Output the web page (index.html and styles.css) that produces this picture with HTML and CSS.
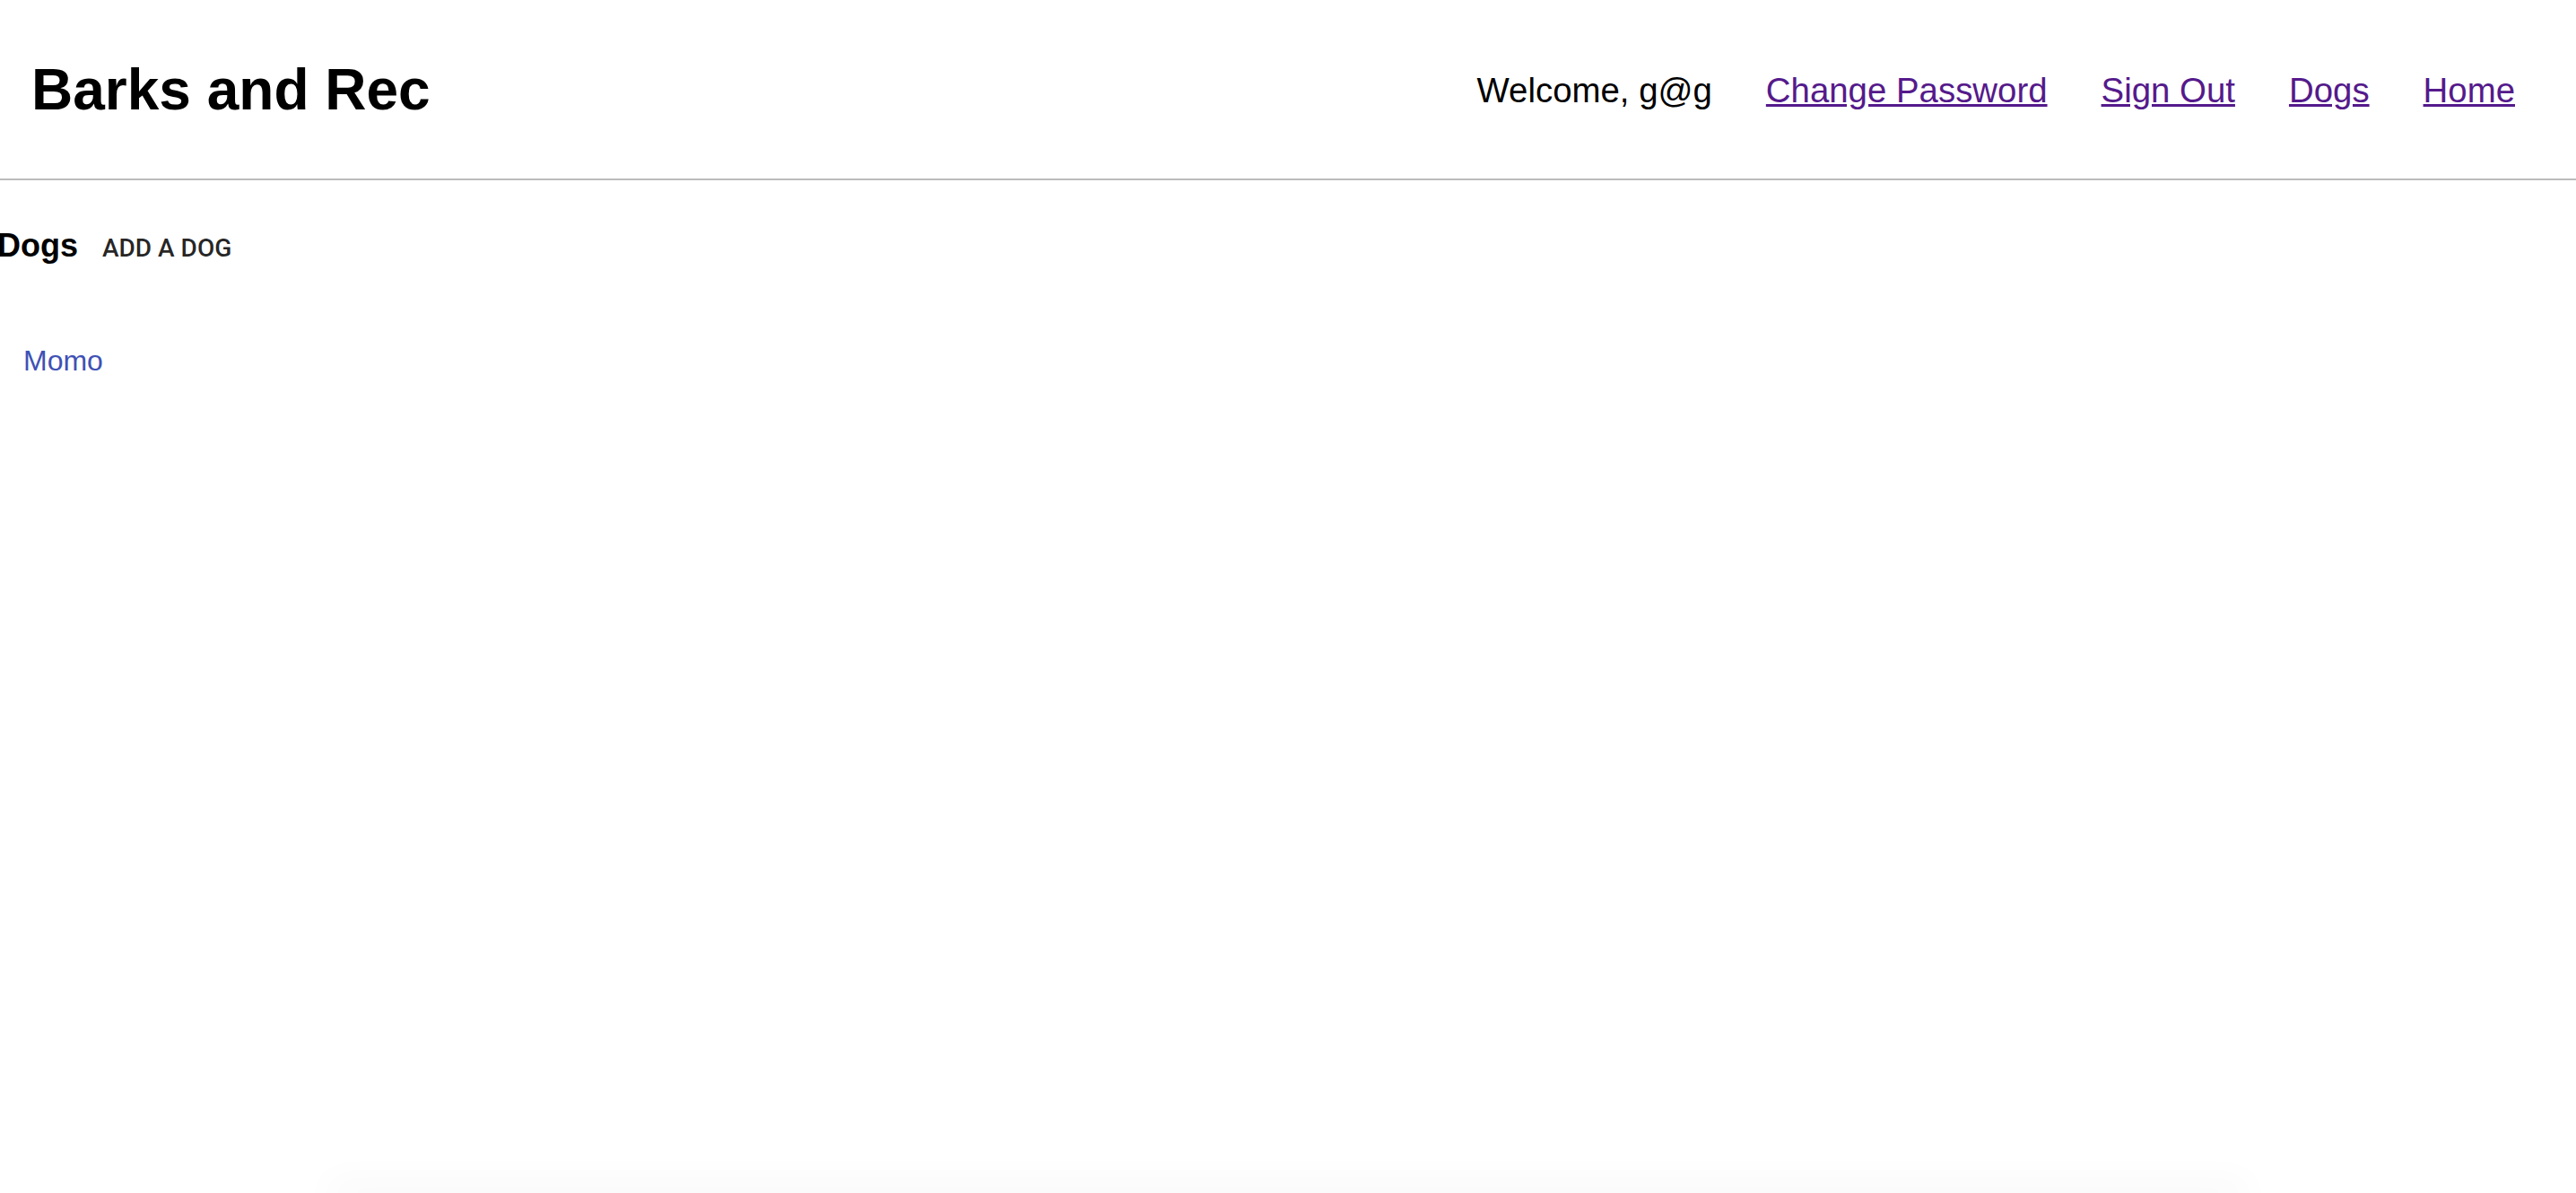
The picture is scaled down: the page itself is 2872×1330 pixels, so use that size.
FILE: index.html
```html
<!DOCTYPE html>
<html lang="en">
<head>
<meta charset="utf-8">
<title>Barks and Rec</title>
<link rel="stylesheet" href="styles.css">
</head>
<body>
<div class="page">
  <header class="site-header">
    <h1 class="brand">Barks and Rec</h1>
    <nav class="site-nav">
      <span class="welcome">Welcome, g@g</span>
      <a class="nav-link" href="#change-password">Change Password</a>
      <a class="nav-link" href="#sign-out">Sign Out</a>
      <a class="nav-link" href="#dogs">Dogs</a>
      <a class="nav-link" href="#home">Home</a>
    </nav>
  </header>
  <main class="content">
    <div class="toolbar">
      <h3 class="section-title">Dogs</h3>
      <button class="text-button" type="button">Add a Dog</button>
    </div>
    <ul class="dog-list">
      <li class="dog-item"><a class="dog-link" href="#momo">Momo</a></li>
    </ul>
  </main>
  <div class="fold-shadow"></div>
</div>
</body>
</html>
```
FILE: styles.css
```css
html, body {
  margin: 0;
  padding: 0;
  height: 100%;
  background: #ffffff;
}

body {
  font-family: "Liberation Sans", Arial, Helvetica, sans-serif;
  color: #000000;
  overflow: hidden;
}

.page {
  min-height: 100vh;
  display: flex;
  flex-direction: column;
}

.site-header {
  display: flex;
  justify-content: space-between;
  align-items: center;
  height: 199px;
  padding: 0 68px 0 35px;
  border-bottom: 2px solid #bbbbbb;
}

.brand {
  margin: 0;
  font-size: 64px;
  font-weight: bold;
}

.site-nav {
  display: flex;
  align-items: baseline;
  gap: 60px;
  font-size: 38.4px;
  padding-top: 2px;
}

.welcome {
  color: #000000;
}

.nav-link {
  color: #551a8b;
  text-decoration: underline;
}

.content {
  display: flex;
  flex-direction: column;
}

.toolbar {
  display: flex;
  align-items: baseline;
  margin-top: 39px;
  margin-left: -3px;
}

.section-title {
  margin: 0 11px 0 0;
  font-size: 36px;
  font-weight: bold;
}

.text-button {
  font-family: Roboto, "Liberation Sans", Arial, sans-serif;
  font-weight: 500;
  font-size: 28px;
  line-height: 1.75;
  letter-spacing: 0;
  text-transform: uppercase;
  color: rgba(0, 0, 0, 0.87);
  background: transparent;
  border: 0;
  padding: 12px 16px;
  min-width: 128px;
  cursor: pointer;
}

.dog-list {
  list-style: none;
  margin: 71px 0 0 0;
  padding: 0 0 0 26px;
}

.dog-item {
  font-size: 32px;
}

.dog-link {
  color: #3f51b5;
  text-decoration: none;
}

.fold-shadow {
  margin-top: auto;
  align-self: center;
  width: 2120px;
  height: 0;
  box-shadow: 0 0 40px 10px rgba(0, 0, 0, 0.045);
}
```
